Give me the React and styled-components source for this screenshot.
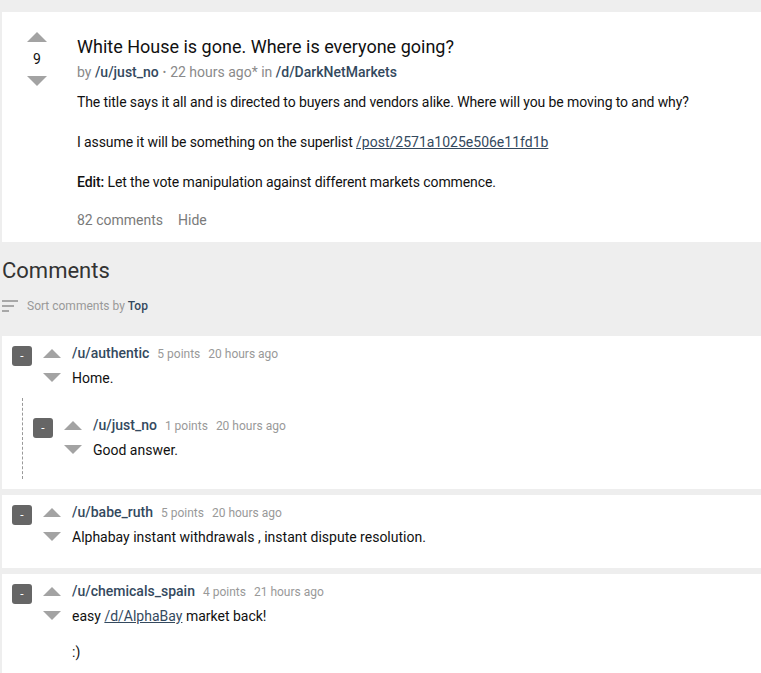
import styled, { createGlobalStyle } from "styled-components";

const GlobalStyle = createGlobalStyle`
  body {
    margin: 0;
    background: #eeeeee;
    font-family: Roboto, "Liberation Sans", sans-serif;
    color: #111;
  }
`;

const Page = styled.div`
  padding: 12px 0 0 2px;
  overflow: hidden;
`;

const PostCard = styled.section`
  background: #ffffff;
  display: grid;
  grid-template-columns: 70px 1fr;
  column-gap: 5px;
  padding: 20px 0 12px;
`;

const VoteColumn = styled.div`
  display: flex;
  flex-direction: column;
  align-items: center;
`;

const Arrow = styled.div`
  width: 0;
  height: 0;
  border-left: ${(p) => p.$size / 2}px solid transparent;
  border-right: ${(p) => p.$size / 2}px solid transparent;
  ${(p) => (p.$down ? "border-top" : "border-bottom")}: ${(p) =>
      Math.round(p.$size / 2)}px solid #a3a3a3;
`;

const Score = styled.div`
  font-size: 14px;
  line-height: 20px;
  margin: 7px 0 7px;
`;

const PostBody = styled.div`
  padding-top: 4px;
`;

const Title = styled.h1`
  margin: 0;
  font-size: 18px;
  font-weight: 400;
  line-height: 22px;
  color: #111;
`;

const Meta = styled.div`
  margin-top: 4px;
  font-size: 14px;
  line-height: 20px;
  color: #8a8a8a;
`;

const Link = styled.a`
  color: #34495e;
  font-weight: ${(p) => (p.$plain ? 400 : 500)};
  text-decoration: ${(p) => (p.$plain ? "underline" : "none")};
  letter-spacing: 0;
`;

const Dot = styled.span`
  font-size: 10px;
  margin: 0 4px;
  vertical-align: 1px;
`;

const Paragraphs = styled.div`
  display: flex;
  flex-direction: column;
  gap: ${(p) => p.$gap}px;
  margin-top: ${(p) => p.$top}px;
  padding-bottom: ${(p) => p.$bottom || 0}px;
  letter-spacing: ${(p) => (p.$tight ? "-0.1px" : "normal")};
`;

const Paragraph = styled.p`
  margin: 0;
  font-size: 14px;
  line-height: 20px;
  color: #111;
`;

const Strong = styled.strong`
  font-weight: 500;
`;

const Actions = styled.div`
  margin-top: 18px;
  display: flex;
  gap: 15px;
  font-size: 14px;
  line-height: 20px;
  color: #7a7a7a;
`;

const CommentsHeading = styled.h2`
  margin: 16px 0 0;
  font-size: 22px;
  font-weight: 400;
  line-height: 26px;
  color: #333;
`;

const SortRow = styled.div`
  margin-top: 14px;
  display: flex;
  align-items: center;
  gap: 9px;
  font-size: 12px;
  line-height: 16px;
  color: #999;
`;

const SortIcon = styled.span`
  display: flex;
  flex-direction: column;
  gap: 3px;
  width: 16px;
`;

const SortLine = styled.span`
  display: block;
  height: 2px;
  width: ${(p) => p.$w}px;
  background: #a8a8a8;
`;

const SortValue = styled.span`
  color: #34495e;
  font-weight: 500;
`;

const CommentList = styled.div`
  margin-top: 22px;
  display: flex;
  flex-direction: column;
  gap: 6px;
`;

const CommentCard = styled.div`
  background: #ffffff;
  padding: 10px 0 10px 10px;
`;

const CommentRow = styled.div`
  display: flex;
  align-items: flex-start;
`;

const Collapse = styled.button`
  width: 20px;
  height: 20px;
  border: none;
  border-radius: 3px;
  background: #666;
  color: #fff;
  font-size: 12px;
  line-height: 20px;
  padding: 0;
  font-family: inherit;
`;

const CommentVotes = styled.div`
  margin-left: 11px;
  padding-top: 3px;
  display: flex;
  flex-direction: column;
  gap: 15px;
`;

const CommentMain = styled.div`
  margin-left: 11px;
`;

const CommentHeader = styled.div`
  font-size: 12px;
  line-height: 14px;
  color: #999;
  display: flex;
  align-items: baseline;
  gap: 8px;
`;

const User = styled.a`
  font-size: 14px;
  font-weight: 500;
  color: #34495e;
`;

const Children = styled.div`
  margin-left: 10px;
  margin-top: -1px;
  border-left: 1px dashed #999;
  padding: 20px 0 8px 10px;
`;

const Comment = ({ c }) => (
  <>
    <CommentRow>
      <Collapse>-</Collapse>
      <CommentVotes>
        <Arrow $size={18} />
        <Arrow $size={18} $down />
      </CommentVotes>
      <CommentMain>
        <CommentHeader>
          <User>{c.user}</User>
          <span>{c.points} points</span>
          <span>{c.time}</span>
        </CommentHeader>
        <Paragraphs $gap={16} $top={7} $bottom={11}>
          {c.body.map((b, i) => (
            <Paragraph key={i}>{b}</Paragraph>
          ))}
        </Paragraphs>
      </CommentMain>
    </CommentRow>
    {c.replies && (
      <Children>
        {c.replies.map((r, i) => (
          <Comment key={i} c={r} />
        ))}
      </Children>
    )}
  </>
);

const comments = [
  {
    user: "/u/authentic",
    points: 5,
    time: "20 hours ago",
    body: ["Home."],
    replies: [
      {
        user: "/u/just_no",
        points: 1,
        time: "20 hours ago",
        body: ["Good answer."],
      },
    ],
  },
  {
    user: "/u/babe_ruth",
    points: 5,
    time: "20 hours ago",
    body: ["Alphabay instant withdrawals , instant dispute resolution."],
  },
  {
    user: "/u/chemicals_spain",
    points: 4,
    time: "21 hours ago",
    body: [
      <>
        easy <Link $plain>/d/AlphaBay</Link> market back!
      </>,
      ":)",
    ],
  },
];

const App = () => {
  return (
    <>
      <GlobalStyle />
      <Page>
        <PostCard>
          <VoteColumn>
            <Arrow $size={20} />
            <Score>9</Score>
            <Arrow $size={20} $down />
          </VoteColumn>
          <PostBody>
            <Title>White House is gone. Where is everyone going?</Title>
            <Meta>
              by <Link>/u/just_no</Link>
              <Dot>•</Dot>22 hours ago* in <Link>/d/DarkNetMarkets</Link>
            </Meta>
            <Paragraphs $gap={20} $top={9} $tight>
              <Paragraph>
                The title says it all and is directed to buyers and vendors
                alike. Where will you be moving to and why?
              </Paragraph>
              <Paragraph>
                I assume it will be something on the superlist{" "}
                <Link $plain>/post/2571a1025e506e11fd1b</Link>
              </Paragraph>
              <Paragraph>
                <Strong>Edit:</Strong> Let the vote manipulation against
                different markets commence.
              </Paragraph>
            </Paragraphs>
            <Actions>
              <span>82 comments</span>
              <span>Hide</span>
            </Actions>
          </PostBody>
        </PostCard>

        <CommentsHeading>Comments</CommentsHeading>
        <SortRow>
          <SortIcon>
            <SortLine $w={16} />
            <SortLine $w={12} />
            <SortLine $w={7} />
          </SortIcon>
          <span>
            Sort comments by <SortValue>Top</SortValue>
          </span>
        </SortRow>

        <CommentList>
          {comments.map((c, i) => (
            <CommentCard key={i}>
              <Comment c={c} />
            </CommentCard>
          ))}
        </CommentList>
      </Page>
    </>
  );
};

export default App;
